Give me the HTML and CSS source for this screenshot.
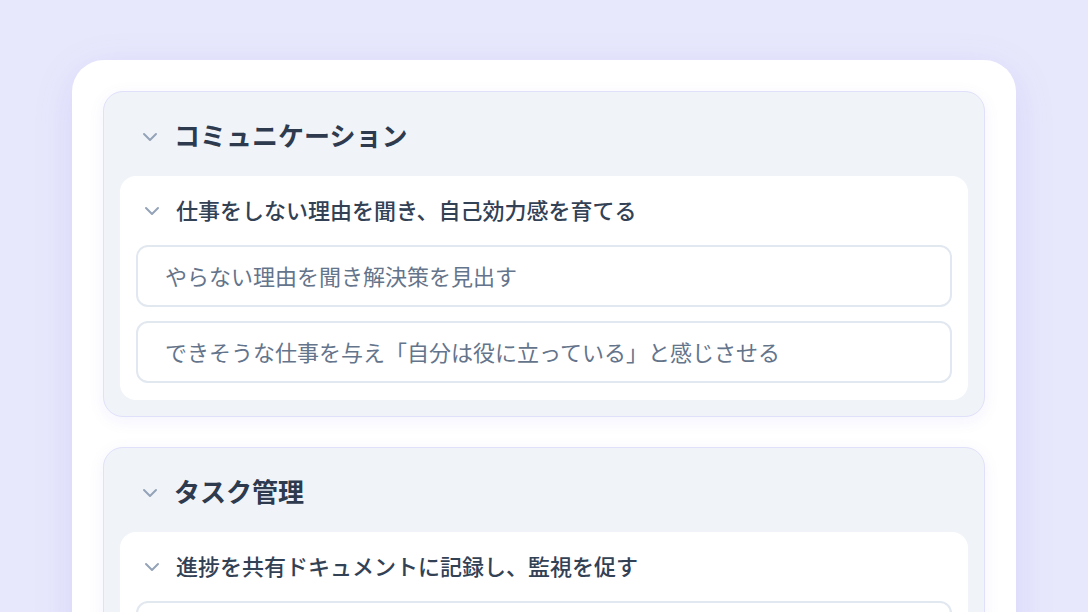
FILE: index.html
```html
<!DOCTYPE html>
<html lang="ja">
<head>
    <meta charset="UTF-8">
    <meta name="viewport" content="width=device-width, initial-scale=1.0">
    <title>改善プラン</title>
    <link rel="stylesheet" href="styles.css">
</head>
<body>
    <div class="board">
        <section class="group">
            <div class="group-head">
                <svg class="chevron" viewBox="0 0 24 24"><path d="m6 9 6 6 6-6"/></svg>
                <h2>コミュニケーション</h2>
            </div>
            <div class="topic">
                <div class="topic-head">
                    <svg class="chevron" viewBox="0 0 24 24"><path d="m6 9 6 6 6-6"/></svg>
                    <h3>仕事をしない理由を聞き、自己効力感を育てる</h3>
                </div>
                <div class="item">やらない理由を聞き解決策を見出す</div>
                <div class="item">できそうな仕事を与え「自分は役に立っている」と感じさせる</div>
            </div>
        </section>

        <section class="group">
            <div class="group-head">
                <svg class="chevron" viewBox="0 0 24 24"><path d="m6 9 6 6 6-6"/></svg>
                <h2>タスク管理</h2>
            </div>
            <div class="topic">
                <div class="topic-head">
                    <svg class="chevron" viewBox="0 0 24 24"><path d="m6 9 6 6 6-6"/></svg>
                    <h3>進捗を共有ドキュメントに記録し、監視を促す</h3>
                </div>
                <div class="item empty"></div>
            </div>
        </section>
    </div>
</body>
</html>
```

FILE: styles.css
```css
body {
    font-family: Inter, "Noto Sans CJK JP", sans-serif;
    background: #e8e8fc;
    margin: 0;
    padding: 60px 0 0;
    color: #334155;
}
.board {
    width: 944px;
    margin: 0 auto;
    box-sizing: border-box;
    padding: 31px;
    background: white;
    border-radius: 32px;
    box-shadow: 0 10px 40px rgba(99, 102, 241, 0.14);
}
.group {
    background: #f0f4f9;
    border: 1px solid #e0e0fa;
    border-radius: 20px;
    padding: 0 16px 16px;
    margin-bottom: 30px;
    box-shadow: 0 4px 16px rgba(99, 102, 241, 0.08);
}
.group-head {
    display: flex;
    align-items: center;
    gap: 12px;
    padding: 26px 18px 20px;
}
.group-head h2 {
    margin: 0;
    font-size: 26px;
    line-height: 38px;
    font-weight: 700;
    color: #2e3a4e;
}
.chevron {
    width: 24px;
    height: 24px;
    flex: none;
    fill: none;
    stroke: #94a3b8;
    stroke-width: 2;
    stroke-linecap: round;
    stroke-linejoin: round;
}
.topic {
    background: white;
    border-radius: 16px;
    padding: 16px 16px 17px;
}
.topic-head {
    display: flex;
    align-items: center;
    gap: 12px;
    padding: 0 4px;
    margin-bottom: 15px;
}
.topic-head h3 {
    margin: 0;
    font-size: 22px;
    line-height: 38px;
    font-weight: 500;
    color: #334155;
}
.item {
    border: 2px solid #e2e8f0;
    border-radius: 12px;
    padding: 17px 27px 15px;
    font-size: 22px;
    line-height: 26px;
    color: #64748b;
    margin-bottom: 14px;
}
.item:last-child {
    margin-bottom: 0;
}
.item.empty {
    height: 26px;
}
```
